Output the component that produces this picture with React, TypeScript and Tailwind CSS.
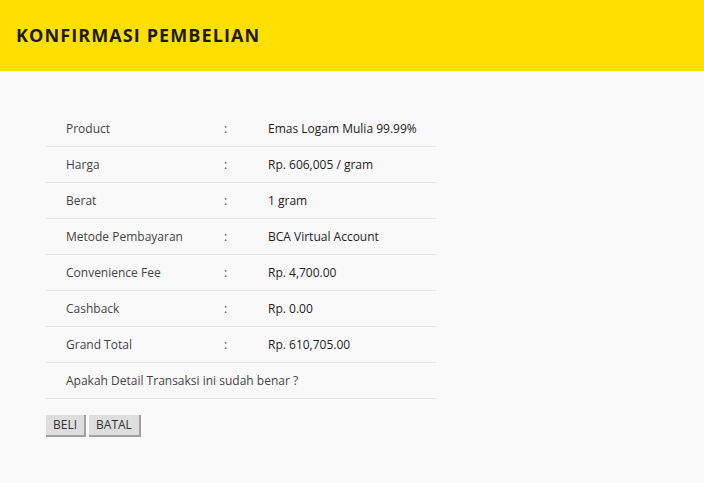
const rows = [
  { label: "Product", value: "Emas Logam Mulia 99.99%" },
  { label: "Harga", value: "Rp. 606,005 / gram" },
  { label: "Berat", value: "1 gram" },
  { label: "Metode Pembayaran", value: "BCA Virtual Account" },
  { label: "Convenience Fee", value: "Rp. 4,700.00" },
  { label: "Cashback", value: "Rp. 0.00" },
  { label: "Grand Total", value: "Rp. 610,705.00" },
];

export default function App() {
  return (
    <div className="min-h-[483px] bg-[#f9f9f9] font-['Open_Sans',sans-serif] text-[#333]">
      <header className="flex h-[71px] items-center bg-[#ffdf00] px-4">
        <h1 className="text-[18px] font-bold tracking-[1.1px] text-[#1a1a1a]">KONFIRMASI PEMBELIAN</h1>
      </header>
      <main className="px-[46px] pt-[40px]">
        <div className="w-[390px] text-[12px]">
          {rows.map((r) => (
            <div key={r.label} className="flex h-[36px] items-center border-b border-[#e6e6e6] pl-5">
              <span className="w-[158px] text-[#444]">{r.label}</span>
              <span className="w-[44px] text-[#444]">:</span>
              <span className="text-[#222]">{r.value}</span>
            </div>
          ))}
          <div className="flex h-[36px] items-center border-b border-[#e6e6e6] pl-5 text-[#444]">
            Apakah Detail Transaksi ini sudah benar ?
          </div>
        </div>
        <div className="mt-4 flex gap-[3px]">
          <button className="h-[22px] border-r-2 border-b-2 border-[#a0a0a0] bg-[#dedede] px-[7px] text-[12px] text-[#333]">
            BELI
          </button>
          <button className="h-[22px] border-r-2 border-b-2 border-[#a0a0a0] bg-[#dedede] px-[7px] text-[12px] text-[#333]">
            BATAL
          </button>
        </div>
      </main>
    </div>
  );
}
